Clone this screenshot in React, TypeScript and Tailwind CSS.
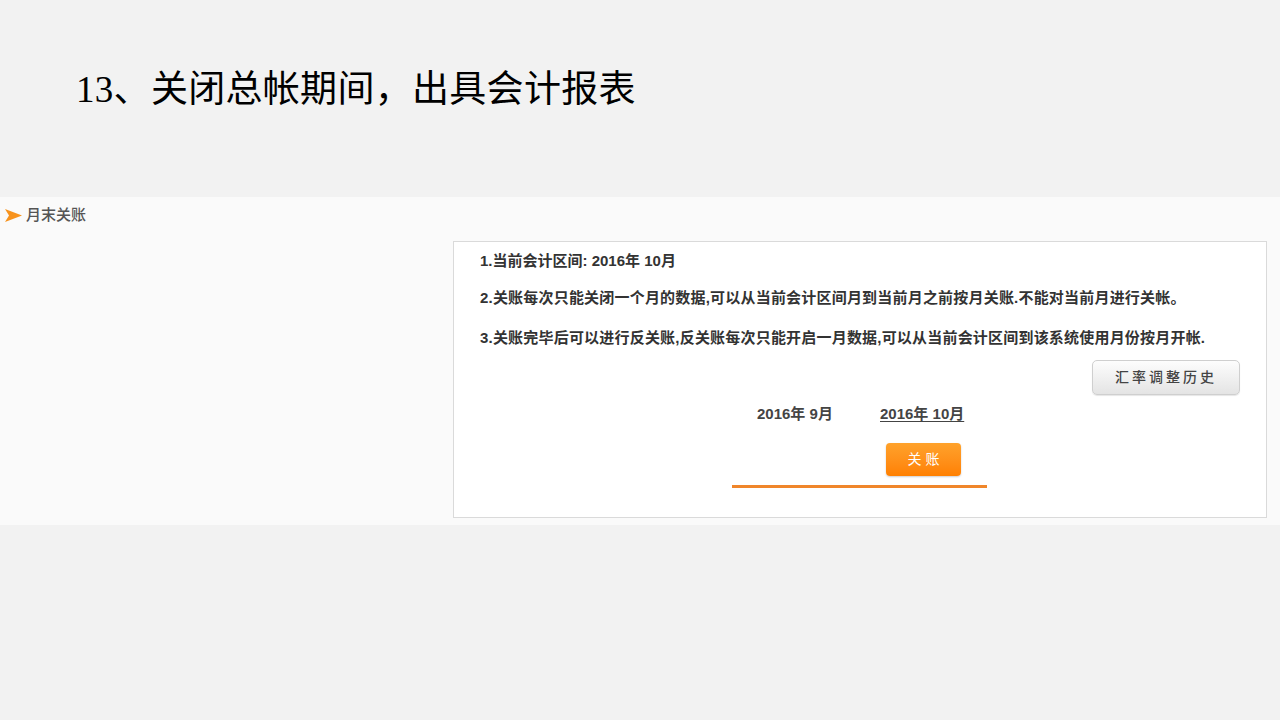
const sans = { fontFamily: '"Liberation Sans", "Noto Sans CJK SC", sans-serif' };

const notes = [
  '1.当前会计区间: 2016年 10月',
  '2.关账每次只能关闭一个月的数据,可以从当前会计区间月到当前月之前按月关账.不能对当前月进行关帐。',
  '3.关账完毕后可以进行反关账,反关账每次只能开启一月数据,可以从当前会计区间到该系统使用月份按月开帐.',
];

const Arrow = () => (
  <svg width="17" height="13" viewBox="0 0 17 13">
    <polygon points="0,0 17,6.5 0,13 4,6.5" fill="#f7931e" />
  </svg>
);

const App = () => {
  return (
    <div className="w-full h-[720px] bg-[#f2f2f2] overflow-hidden">
      <h1
        className="pl-[76px] pt-[70px] text-[37px] leading-[40px] font-normal tracking-[0.3px] text-black"
        style={{ fontFamily: '"Liberation Serif", "Noto Sans CJK SC", serif' }}
      >
        13、关闭总帐期间，出具会计报表
      </h1>

      <div className="mt-[87px] h-[328px] bg-[#fafafa] flex" style={sans}>
        <aside className="w-[453px] shrink-0">
          <div className="flex items-center gap-[4px] pl-[5px] pt-[8px] h-[20px] box-content">
            <Arrow />
            <span className="text-[15px] font-medium text-[#555]">月末关账</span>
          </div>
        </aside>

        <section className="mt-[44px] w-[814px] h-[277px] bg-white border border-[#dadada] flex flex-col">
          <div className="pl-[26px] pt-[8px] flex flex-col gap-[16px] text-[15px] leading-[22px] font-semibold text-[#333]">
            <p>{notes[0]}</p>
            <p className="-mt-[1px] tracking-[0.2px]">{notes[1]}</p>
            <p className="mt-[2px] tracking-[0.2px]">{notes[2]}</p>
          </div>

          <div className="flex justify-end pr-[26px] mt-[11px]">
            <button className="w-[148px] h-[35px] rounded-[5px] border border-[#cfcfcf] bg-gradient-to-b from-[#fdfdfd] to-[#e4e4e4] text-[14px] font-medium text-[#444] tracking-[3px] shadow-[0_1px_1px_rgba(0,0,0,0.1)]">
              汇率调整历史
            </button>
          </div>

          <div className="flex mt-[8px] h-[22px] items-center text-[15px] font-semibold text-[#444]">
            <span className="ml-[303px] w-[123px]">2016年 9月</span>
            <span className="underline underline-offset-2">2016年 10月</span>
          </div>

          <button className="ml-[432px] mt-[18px] w-[75px] h-[33px] rounded-[4px] bg-gradient-to-b from-[#ffa22a] to-[#ff8000] text-white text-[14px] tracking-[4px] pl-[4px] shadow-[0_1px_2px_rgba(0,0,0,0.2)]">
            关账
          </button>

          <div className="ml-[278px] mt-[9px] w-[255px] h-[3px] bg-[#f0862a]" />
        </section>
      </div>
    </div>
  );
};

export default App;
